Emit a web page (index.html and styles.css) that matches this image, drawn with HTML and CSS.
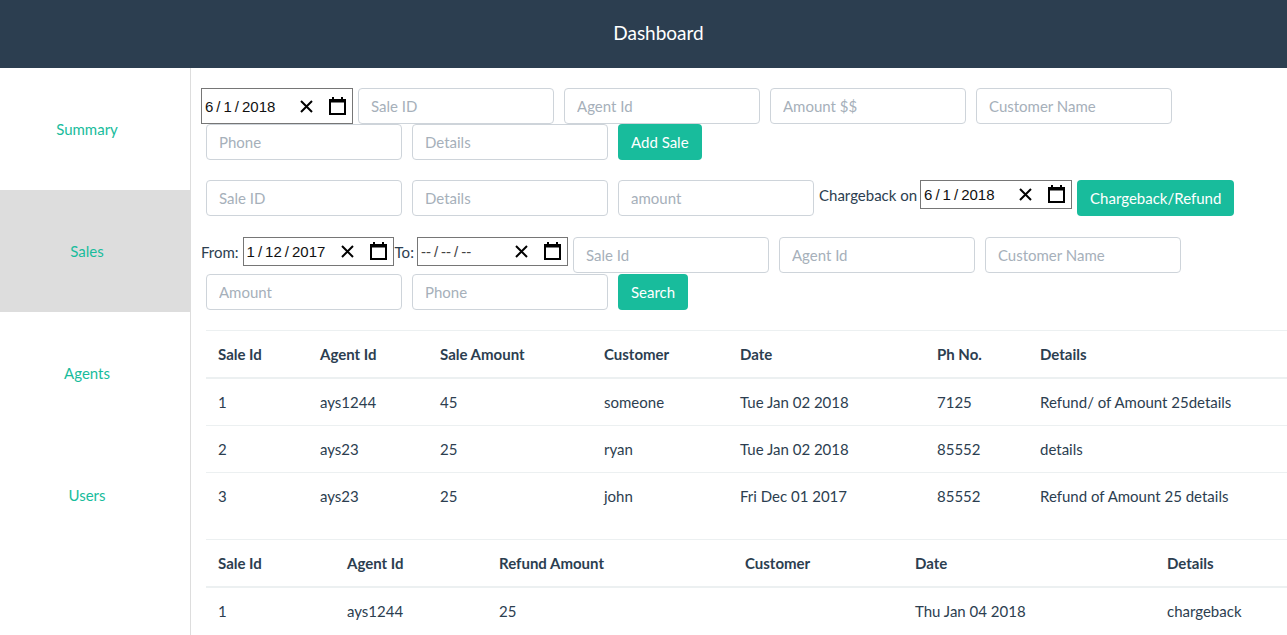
FILE: index.html
```html
<!DOCTYPE html>
<html lang="en">
<head>
<meta charset="utf-8">
<title>Dashboard</title>
<link rel="stylesheet" href="styles.css">
</head>
<body>
<header class="topbar">Dashboard</header>
<div class="layout">
  <nav class="sidebar">
    <a class="side-item" href="#">Summary</a>
    <a class="side-item active" href="#">Sales</a>
    <a class="side-item" href="#">Agents</a>
    <a class="side-item" href="#">Users</a>
  </nav>
  <main class="main">
    <form class="form-row form-add">
      <div class="date-box large">
        <span class="date-text">6<i>/</i>1<i>/</i>2018</span>
        <svg class="ico-x" width="13" height="13" viewBox="0 0 13 13"><path d="M1 1L12 12M12 1L1 12" stroke="#000" stroke-width="2" fill="none"/></svg>
        <svg class="ico-cal" width="17" height="18" viewBox="0 0 17 18"><rect x="1" y="3" width="15" height="14" stroke="#000" stroke-width="2" fill="none"/><rect x="1" y="3" width="15" height="2.5" fill="#000"/><rect x="3" y="0" width="2" height="4" fill="#000"/><rect x="12" y="0" width="2" height="4" fill="#000"/></svg>
      </div>
      <input class="field" type="text" placeholder="Sale ID">
      <input class="field" type="text" placeholder="Agent Id">
      <input class="field" type="text" placeholder="Amount $$">
      <input class="field" type="text" placeholder="Customer Name">
      <input class="field" type="text" placeholder="Phone">
      <input class="field" type="text" placeholder="Details">
      <button class="btn" type="button">Add Sale</button>
    </form>

    <form class="form-row form-charge">
      <input class="field" type="text" placeholder="Sale ID">
      <input class="field" type="text" placeholder="Details">
      <input class="field" type="text" placeholder="amount">
      <div class="label-group">
        <span class="lbl lbl-charge">Chargeback on</span>
        <div class="date-box small wide">
          <span class="date-text">6<i>/</i>1<i>/</i>2018</span>
          <svg class="ico-x" width="13" height="13" viewBox="0 0 13 13"><path d="M1 1L12 12M12 1L1 12" stroke="#000" stroke-width="2" fill="none"/></svg>
          <svg class="ico-cal" width="17" height="18" viewBox="0 0 17 18"><rect x="1" y="3" width="15" height="14" stroke="#000" stroke-width="2" fill="none"/><rect x="1" y="3" width="15" height="2.5" fill="#000"/><rect x="3" y="0" width="2" height="4" fill="#000"/><rect x="12" y="0" width="2" height="4" fill="#000"/></svg>
        </div>
      </div>
      <button class="btn" type="button">Chargeback/Refund</button>
    </form>

    <form class="form-row form-search">
      <div class="label-group">
        <span class="lbl lbl-from">From:</span>
        <div class="date-box small">
          <span class="date-text">1<i>/</i>12<i>/</i>2017</span>
          <svg class="ico-x" width="13" height="13" viewBox="0 0 13 13"><path d="M1 1L12 12M12 1L1 12" stroke="#000" stroke-width="2" fill="none"/></svg>
          <svg class="ico-cal" width="17" height="18" viewBox="0 0 17 18"><rect x="1" y="3" width="15" height="14" stroke="#000" stroke-width="2" fill="none"/><rect x="1" y="3" width="15" height="2.5" fill="#000"/><rect x="3" y="0" width="2" height="4" fill="#000"/><rect x="12" y="0" width="2" height="4" fill="#000"/></svg>
        </div>
        <span class="lbl lbl-to">To:</span>
        <div class="date-box small">
          <span class="date-text empty">--<i>/</i>--<i>/</i>--</span>
          <svg class="ico-x" width="13" height="13" viewBox="0 0 13 13"><path d="M1 1L12 12M12 1L1 12" stroke="#000" stroke-width="2" fill="none"/></svg>
          <svg class="ico-cal" width="17" height="18" viewBox="0 0 17 18"><rect x="1" y="3" width="15" height="14" stroke="#000" stroke-width="2" fill="none"/><rect x="1" y="3" width="15" height="2.5" fill="#000"/><rect x="3" y="0" width="2" height="4" fill="#000"/><rect x="12" y="0" width="2" height="4" fill="#000"/></svg>
        </div>
      </div>
      <input class="field" type="text" placeholder="Sale Id">
      <input class="field" type="text" placeholder="Agent Id">
      <input class="field" type="text" placeholder="Customer Name">
      <input class="field" type="text" placeholder="Amount">
      <input class="field" type="text" placeholder="Phone">
      <button class="btn" type="button">Search</button>
    </form>

    <table class="table">
      <colgroup>
        <col class="c102"><col class="c120"><col class="c164"><col class="c136"><col class="c197"><col class="c103"><col>
      </colgroup>
      <thead>
        <tr><th>Sale Id</th><th>Agent Id</th><th>Sale Amount</th><th>Customer</th><th>Date</th><th>Ph No.</th><th>Details</th></tr>
      </thead>
      <tbody>
        <tr><td>1</td><td>ays1244</td><td>45</td><td>someone</td><td>Tue Jan 02 2018</td><td>7125</td><td>Refund/ of Amount 25details</td></tr>
        <tr><td>2</td><td>ays23</td><td>25</td><td>ryan</td><td>Tue Jan 02 2018</td><td>85552</td><td>details</td></tr>
        <tr><td>3</td><td>ays23</td><td>25</td><td>john</td><td>Fri Dec 01 2017</td><td>85552</td><td>Refund of Amount 25 details</td></tr>
      </tbody>
    </table>

    <table class="table">
      <colgroup>
        <col class="c129"><col class="c152"><col class="c246"><col class="c170"><col class="c252"><col>
      </colgroup>
      <thead>
        <tr><th>Sale Id</th><th>Agent Id</th><th>Refund Amount</th><th>Customer</th><th>Date</th><th>Details</th></tr>
      </thead>
      <tbody>
        <tr><td>1</td><td>ays1244</td><td>25</td><td></td><td>Thu Jan 04 2018</td><td>chargeback</td></tr>
      </tbody>
    </table>
  </main>
</div>
</body>
</html>
```

FILE: styles.css
```css
html, body {
  margin: 0;
  padding: 0;
  overflow: hidden;
}
body {
  font-family: Lato, "Open Sans", sans-serif;
  font-size: 15px;
  color: #2c3e50;
  background: #fff;
}
.topbar {
  height: 68px;
  background: #2c3e50;
  color: #fff;
  font-size: 19px;
  display: flex;
  align-items: center;
  justify-content: center;
  padding: 0 0 3px 30px;
  box-sizing: border-box;
}
.layout {
  display: flex;
  min-height: calc(100vh - 68px);
}
.sidebar {
  width: 190px;
  flex: none;
  border-right: 1px solid #dddddd;
  display: flex;
  flex-direction: column;
}
.side-item {
  height: 122px;
  display: flex;
  align-items: center;
  justify-content: center;
  padding-right: 16px;
  color: #18bc9c;
  text-decoration: none;
  font-size: 15px;
}
.side-item.active {
  background: #dddddd;
}
.main {
  flex: 1;
  min-width: 0;
  padding: 20px 0 0 10px;
}
.form-row {
  display: flex;
  flex-wrap: wrap;
  align-items: flex-start;
  margin: 0;
}
.form-add { margin-bottom: 20px; }
.form-charge { margin-bottom: 21px; }
.form-search { margin-bottom: 20px; row-gap: 1px; }
.field {
  box-sizing: border-box;
  width: 196px;
  height: 36px;
  margin: 0 5px;
  padding: 0 12px;
  border: 1px solid #ced4da;
  border-radius: 4px;
  font-family: Lato, sans-serif;
  font-size: 15px;
  color: #2c3e50;
  background: #fff;
  outline: none;
}
.field::placeholder {
  color: #a6b0ba;
  opacity: 1;
}
.btn {
  height: 36px;
  margin: 0 5px;
  padding: 0 13px;
  border: none;
  border-radius: 4px;
  background: #18bc9c;
  color: #fff;
  font-family: Lato, sans-serif;
  font-size: 15px;
}
.label-group {
  display: flex;
  align-items: center;
}
.lbl {
  color: #2c3e50;
  font-size: 15px;
}
.lbl-charge { margin-right: 3px; }
.lbl-from { margin-right: 4px; }
.lbl-to { margin-left: 1px; margin-right: 3px; }
.date-box {
  box-sizing: border-box;
  display: flex;
  align-items: center;
  border: 1px solid #767676;
  background: #fff;
  padding: 0 6px 0 3px;
}
.date-box.large {
  width: 152px;
  height: 36px;
}
.date-box.small {
  width: 151px;
  height: 29px;
}
.date-box.small.wide {
  width: 152px;
}
.date-text {
  flex: 1;
  font-family: "Liberation Sans", Arial, sans-serif;
  font-size: 15px;
  color: #111;
  white-space: nowrap;
}
.date-text i {
  font-style: normal;
  margin: 0 3px;
}
.date-text.empty { color: #444; }
.ico-x {
  flex: none;
  margin-right: 16px;
}
.ico-cal {
  flex: none;
  margin-top: -1px;
}
.table {
  width: 1081px;
  margin-left: 5px;
  margin-bottom: 20px;
  border-collapse: collapse;
  table-layout: fixed;
}
.table th, .table td {
  text-align: left;
  padding: 12px;
  line-height: 22px;
  border-top: 1px solid #ecf0f1;
  white-space: nowrap;
  overflow: hidden;
}
.table th {
  font-weight: 700;
  border-bottom: 2px solid #ecf0f1;
}
.c102 { width: 102px; }
.c120 { width: 120px; }
.c164 { width: 164px; }
.c136 { width: 136px; }
.c197 { width: 197px; }
.c103 { width: 103px; }
.c129 { width: 129px; }
.c152 { width: 152px; }
.c246 { width: 246px; }
.c170 { width: 170px; }
.c252 { width: 252px; }
```
